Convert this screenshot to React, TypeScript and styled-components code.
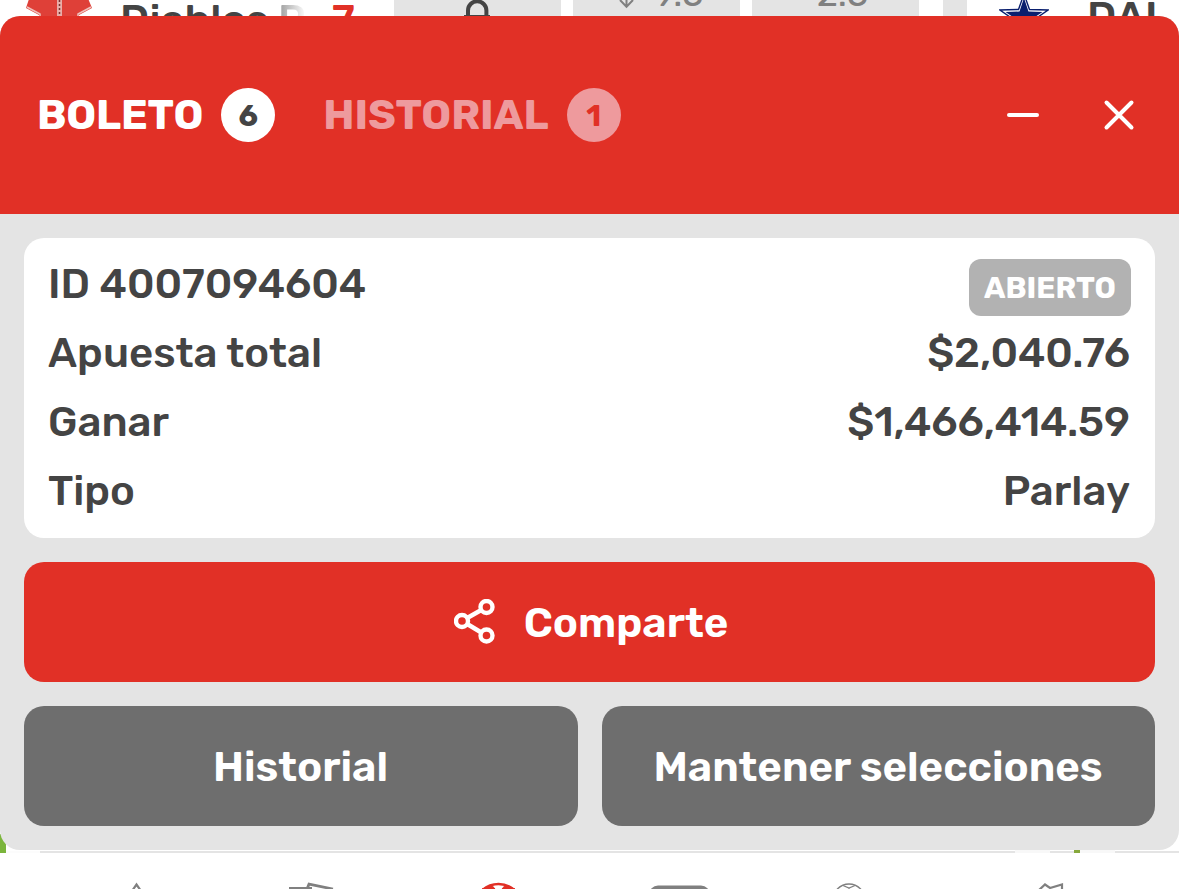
import React from 'react';
import styled, { createGlobalStyle } from 'styled-components';

const GlobalStyle = createGlobalStyle`
  * { box-sizing: border-box; }
  body { margin: 0; background: #fff; font-family: Rubik, Roboto, "Liberation Sans", sans-serif; }
  button { font: inherit; border: 0; padding: 0; background: none; cursor: pointer; }
`;

const Screen = styled.div`
  position: relative;
  width: 1179px;
  height: 889px;
  overflow: hidden;
  display: flex;
  flex-direction: column;
  justify-content: space-between;
  background: #fff;
`;

const Text = styled.span<{ $ls?: number }>`
  letter-spacing: ${p => p.$ls ?? 0}px;
  margin-right: ${p => -(p.$ls ?? 0)}px;
  white-space: nowrap;
`;

const MarketRow = styled.div`
  display: flex;
  height: 60px;
  gap: 12px;
`;
const TeamCell = styled.div<{ $width: number; $left: number }>`
  display: flex;
  width: ${p => p.$width}px;
  padding-left: ${p => p.$left}px;
  font-size: 42px;
  line-height: 42px;
  font-weight: 500;
  color: #444;
  svg { flex: none; }
`;
const TeamName = styled.div<{ $left: number; $top: number; $width: number }>`
  width: ${p => p.$width}px;
  margin: ${p => p.$top}px 0 0 ${p => p.$left}px;
`;
const Faded = styled.div`
  width: 28px;
  margin-top: -1px;
  color: transparent;
  background: linear-gradient(90deg, #999, #fff);
  background-clip: text;
`;
const Score = styled.div`
  margin: -1px 0 0 26px;
  color: #e13026;
`;
const Odd = styled.div<{ $shift?: number }>`
  display: flex;
  justify-content: center;
  width: 167px;
  padding-left: ${p => p.$shift ?? 0}px;
  background: #e4e4e4;
  color: #808080;
  font-size: 36px;
  line-height: 38px;
  svg { flex: none; }
`;
const OddValue = styled.div<{ $left?: number }>`
  margin: -25px 0 0 ${p => p.$left ?? 0}px;
`;
const Divider = styled.div`
  width: 24px;
  margin: 0 -12px 0 12px;
  background: #e4e4e4;
`;

const Footer = styled.footer`
  height: 55px;
`;
const ListEdge = styled.div`
  display: flex;
  align-items: flex-end;
  height: 19px;
`;
const Edge = styled.div<{ $w: number; $h: number; $c: string }>`
  width: ${p => p.$w}px;
  height: ${p => p.$h}px;
  background: ${p => p.$c};
`;
const Nav = styled.nav`
  height: 36px;
  background: #fff;
  svg { display: block; }
`;

const Slip = styled.section`
  position: absolute;
  top: 16px;
  left: 0;
  width: 1179px;
  height: 834px;
  overflow: hidden;
  border-radius: 20px;
  background: #e4e4e4;
`;
const Header = styled.header`
  display: flex;
  align-items: center;
  height: 198px;
  padding: 0 43px 0 37px;
  background: #e13026;
`;
const Tab = styled.button<{ $muted?: boolean }>`
  display: flex;
  align-items: center;
  gap: 18px;
  margin-right: 48px;
  color: ${p => (p.$muted ? '#ee9a9d' : '#fff')};
  font-size: 42px;
  font-weight: 700;
`;
const Count = styled.span<{ $muted?: boolean }>`
  display: flex;
  align-items: center;
  justify-content: center;
  width: 54px;
  height: 54px;
  padding-top: 1px;
  border-radius: 50%;
  background: ${p => (p.$muted ? '#ee9a9d' : '#fff')};
  color: ${p => (p.$muted ? '#e13026' : '#444')};
  font-size: 30px;
  font-weight: 700;
`;
const Tools = styled.div`
  display: flex;
  gap: 62px;
  margin-left: auto;
  svg { display: block; }
`;
const Body = styled.div`
  display: flex;
  flex-direction: column;
  gap: 24px;
  padding: 24px;
`;
const Card = styled.div`
  height: 300px;
  padding: 11px 25px 13px 24px;
  border-radius: 20px;
  background: #fff;
`;
const Row = styled.div`
  display: flex;
  justify-content: space-between;
  align-items: center;
  height: 69px;
  color: #444;
  font-size: 42px;
  font-weight: 500;
`;
const Status = styled.span`
  display: flex;
  align-items: center;
  justify-content: center;
  width: 162px;
  height: 57px;
  margin: 8px -1px 0 0;
  border-radius: 12px;
  background: #b2b2b2;
  color: #fff;
  font-size: 30px;
  font-weight: 700;
`;
const Actions = styled.div`
  display: grid;
  grid-template-columns: 554px 553px;
  gap: 24px;
`;
const Action = styled.button<{ $primary?: boolean }>`
  display: flex;
  align-items: center;
  justify-content: center;
  gap: 28px;
  height: 120px;
  padding: ${p => (p.$primary ? '0 0 0 3px' : '2px 1px 0 0')};
  border-radius: 20px;
  background: ${p => (p.$primary ? '#e13026' : '#6e6e6e')};
  color: #fff;
  font-size: 42px;
  font-weight: 600;
`;
const ShareLabel = styled(Text)`
  padding-top: 2px;
`;

const Jersey = () => (
  <svg width="70" height="30" viewBox="0 0 70 30">
    <path d="M4 -4 L0 8 L13 15 V30 H53 V15 L66 8 L61 -4Z" fill="#df4038" />
    <path d="M1 7 L14 14 V20 M65 7 L52 14 V20" stroke="#eec2bd" strokeWidth="1.5" fill="none" />
    <path d="M33.500 0 V30" stroke="#e9ada8" strokeWidth="5" />
    <path d="M33.500 0 V30" stroke="#7a3430" strokeWidth="1.500" strokeDasharray="2 2" />
  </svg>
);
const Star = () => (
  <svg width="50" height="40" viewBox="0 0 50 40">
    <path d="M25 -6 L30.500 9.500 L49 10 L34 20.500 L39 38 L25 28 L11 38 L16 20.500 L1 10 L19.500 9.500Z" fill="#fff" stroke="#0a1f6e" strokeWidth="1.400" />
    <path d="M25 -2 L29.500 11.500 L43.500 12 L31.500 20 L35.500 33 L25 25 L14.500 33 L18.500 20 L6.500 12 L20.500 11.500Z" fill="#0a1f6e" />
  </svg>
);
const Lock = () => (
  <svg width="30" height="40" viewBox="0 0 30 40" fill="none" stroke="#444" strokeWidth="4">
    <path d="M5 18 V10.500 A9.200 9.200 0 0 1 23.400 10.500 V18" />
    <path d="M1 17 H27" />
  </svg>
);
const Drop = () => (
  <svg width="16" height="10" viewBox="0 0 16 10" fill="none" stroke="#808080" strokeWidth="2">
    <path d="M7.500 -5 V6 M1 0 L7.500 6.700 L14 0" />
  </svg>
);
const NavIcons = () => (
  <svg width="1179" height="36" viewBox="0 853 1179 36" fill="none" stroke="#808080" strokeWidth="2.200">
    <path d="M132 891 L136.500 884.500 L141 891" />
    <path d="M289 888.500 H312 M307 889 L309 884.200 L333 889" strokeWidth="2.800" />
    <circle cx="498.500" cy="908" r="24" stroke="#e13026" strokeWidth="2.500" />
    <path d="M482 889 L492 885.500 L495 889Z M515 889 L505 885.500 L502 889Z" fill="#e13026" stroke="#e13026" strokeWidth="1" />
    <rect x="649" y="885.500" width="61" height="30" rx="9" fill="#808080" stroke="none" />
    <circle cx="849" cy="900" r="16" strokeWidth="1.500" />
    <path d="M843 885.500 L849 888 L855 885.500 M849 888 V892" strokeWidth="1.300" />
    <path d="M1038 891 L1045 884.500 L1050 888 L1062 884.500 V892" />
  </svg>
);

export default function App() {
  return (
    <>
      <GlobalStyle />
      <Screen>
        <MarketRow>
          <TeamCell $width={382} $left={26}>
            <Jersey />
            <TeamName $left={24} $top={-1} $width={158}>Diablos</TeamName>
            <Faded>R</Faded>
            <Score>7</Score>
          </TeamCell>
          <Odd><Lock /></Odd>
          <Odd $shift={10}><Drop /><OddValue $left={19}>9.5</OddValue></Odd>
          <Odd><OddValue $left={14}>2.5</OddValue></Odd>
          <Divider />
          <TeamCell $width={210} $left={32}>
            <Star />
            <TeamName $left={38} $top={-4} $width={80}>DAL</TeamName>
          </TeamCell>
        </MarketRow>
        <Footer>
          <ListEdge>
            <Edge $w={6} $h={19} $c="#7bb53c" />
            <Edge $w={34} $h={2} $c="#fcfcfc" />
            <Edge $w={975} $h={2} $c="#e4e4e4" />
            <Edge $w={35} $h={3} $c="#f8f8f8" />
            <Edge $w={24} $h={2} $c="#e4e4e4" />
            <Edge $w={6} $h={3} $c="#86a83c" />
            <Edge $w={35} $h={3} $c="#f8f8f8" />
            <Edge $w={64} $h={2} $c="#e4e4e4" />
          </ListEdge>
          <Nav><NavIcons /></Nav>
        </Footer>
        <Slip>
          <Header>
            <Tab><Text $ls={-0.2}>BOLETO</Text><Count>6</Count></Tab>
            <Tab $muted><Text $ls={-0.1}>HISTORIAL</Text><Count $muted>1</Count></Tab>
            <Tools>
              <svg width="34" height="34" viewBox="0 0 34 34" stroke="#fff" strokeWidth="4" strokeLinecap="round"><path d="M3 17 H31" /></svg>
              <svg width="34" height="34" viewBox="0 0 34 34" stroke="#fff" strokeWidth="4" strokeLinecap="round"><path d="M4.500 4.500 L29.500 29.500 M29.500 4.500 L4.500 29.500" /></svg>
            </Tools>
          </Header>
          <Body>
            <Card>
              <Row><Text $ls={-0.05}>ID 4007094604</Text><Status><Text>ABIERTO</Text></Status></Row>
              <Row><Text>Apuesta total</Text><Text $ls={-0.1}>$2,040.76</Text></Row>
              <Row><Text>Ganar</Text><Text $ls={-0.08}>$1,466,414.59</Text></Row>
              <Row><Text>Tipo</Text><Text>Parlay</Text></Row>
            </Card>
            <Action $primary>
              <svg width="42" height="46" viewBox="0 0 42 46" fill="none" stroke="#fff" strokeWidth="4.400">
                <circle cx="8" cy="22" r="6" /><circle cx="32.500" cy="8" r="6" /><circle cx="32.500" cy="36.500" r="6" />
                <path d="M13.200 19 L27.300 11 M13.200 25 L27.300 33.500" />
              </svg>
              <ShareLabel>Comparte</ShareLabel>
            </Action>
            <Actions>
              <Action><Text>Historial</Text></Action>
              <Action><Text>Mantener selecciones</Text></Action>
            </Actions>
          </Body>
        </Slip>
      </Screen>
    </>
  );
}
